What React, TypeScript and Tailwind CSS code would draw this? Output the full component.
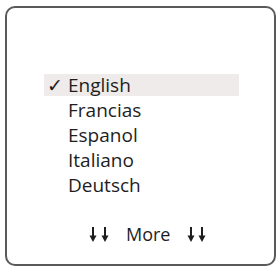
import React from "react";

function Arrow() {
  return (
    <svg width="8" height="15" viewBox="0 0 8 15" className="block">
      <line x1="4" y1="0" x2="4" y2="10" stroke="#1e1e1e" strokeWidth="2" />
      <polygon points="0.5,8.5 7.5,8.5 4,15" fill="#1e1e1e" />
    </svg>
  );
}

export default function App() {
  const langs = ["English", "Francias", "Espanol", "Italiano", "Deutsch"];
  return (
    <div className="w-[279px] h-[267px] bg-white pt-[6px] pl-[5px]" style={{ fontFamily: '"Open Sans", "Noto Sans", sans-serif' }}>
      <div className="w-[271px] h-[260px] border-2 border-[#5a5a5a] rounded-[10px] flex flex-col pt-[66px] pl-[37px] text-[#1e1e1e]">
        <div className="flex flex-col gap-[3px]">
          {langs.map((l, i) => (
            <div
              key={l}
              className={`w-[195px] h-[22px] flex items-center text-[19px] leading-[22px] ${i === 0 ? "bg-[#efebeb]" : ""}`}
            >
              <span className="w-[24px] pl-[3px] text-[19px]" style={{ fontFamily: '"DejaVu Sans", sans-serif', fontWeight: 300 }}>{i === 0 ? "✓" : ""}</span>
              <span>{l}</span>
            </div>
          ))}
        </div>
        <div className="flex items-center mt-[27px] ml-[45px] text-[18px] leading-[22px]">
          <div className="flex gap-[4px] pt-[1px]">
            <Arrow />
            <Arrow />
          </div>
          <span className="ml-[17px]">More</span>
          <div className="flex gap-[3px] ml-[17px] pt-[1px]">
            <Arrow />
            <Arrow />
          </div>
        </div>
      </div>
    </div>
  );
}
